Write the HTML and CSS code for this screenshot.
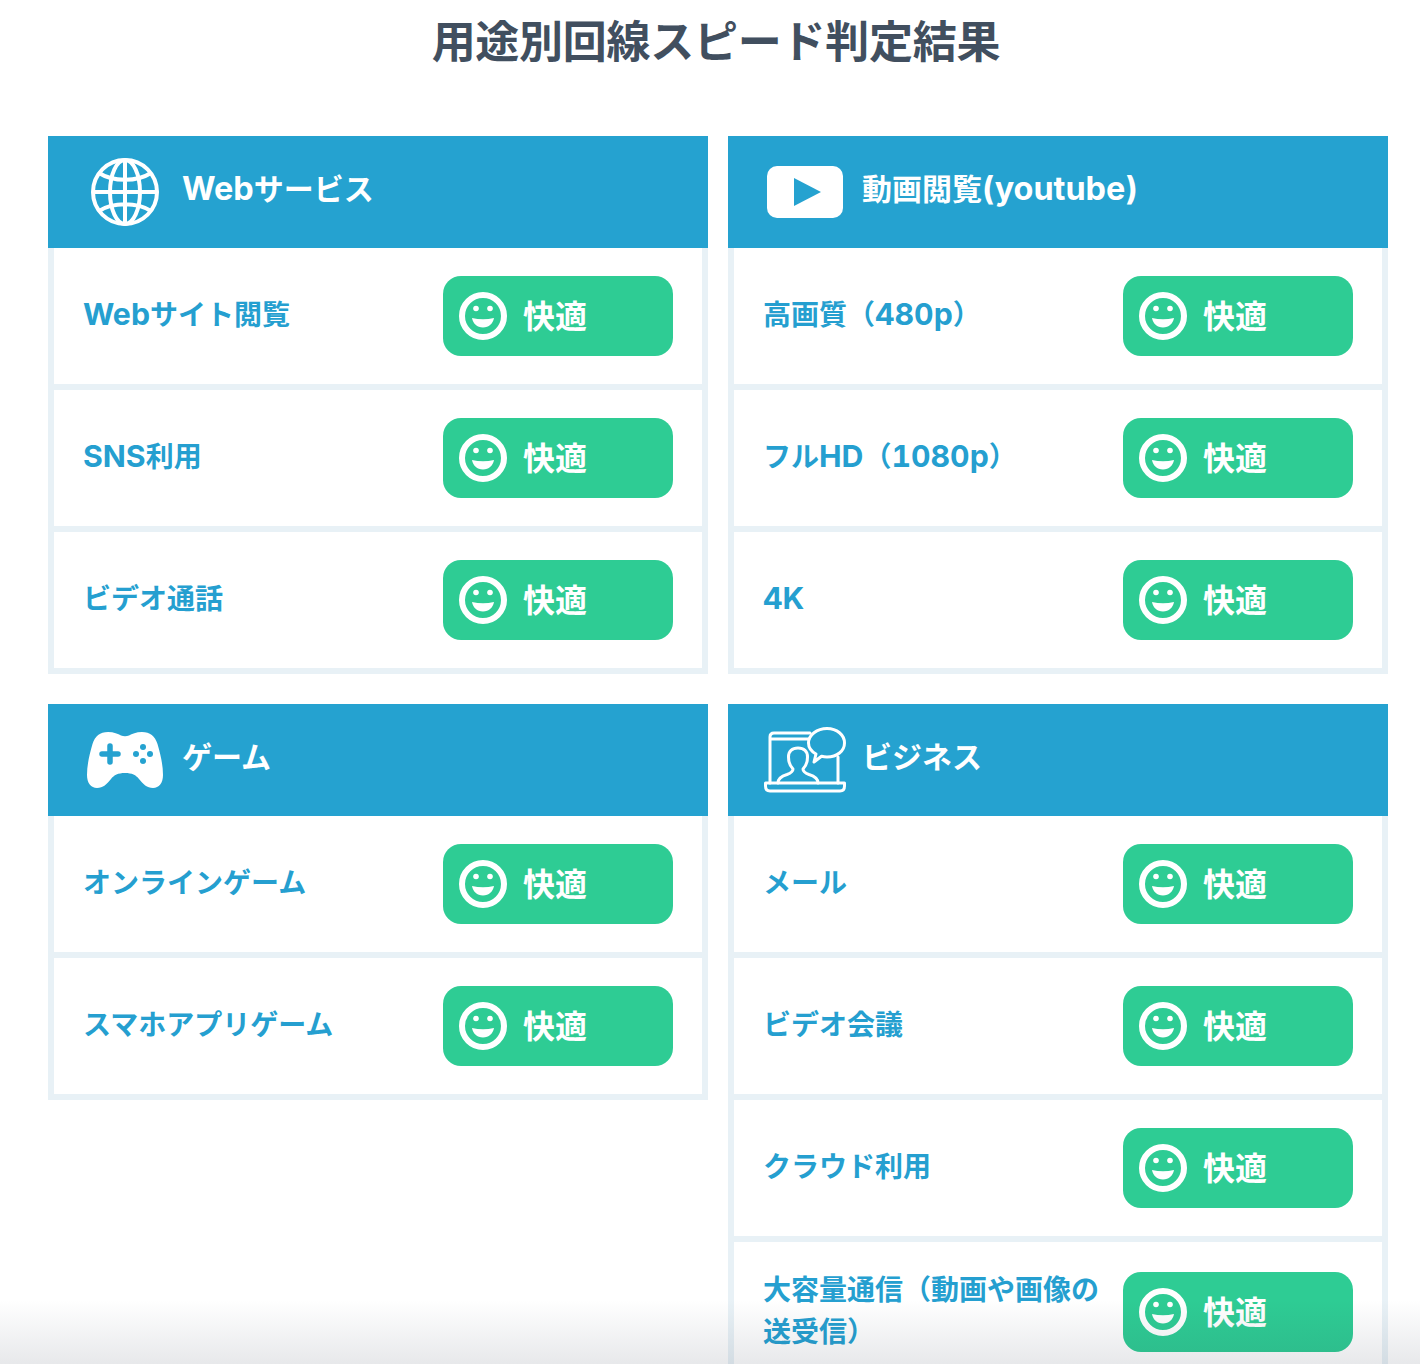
FILE: index.html
```html
<!DOCTYPE html>
<html lang="ja">
<head>
<meta charset="utf-8">
<title>用途別回線スピード判定結果</title>
<link rel="stylesheet" href="styles.css">
</head>
<body>
<svg class="defs" width="0" height="0" aria-hidden="true">
  <symbol id="smile" viewBox="0 0 48 48">
    <circle cx="24" cy="24" r="21" fill="none" stroke="#fff" stroke-width="6"/>
    <circle cx="17" cy="16.500" r="2.800" fill="#fff"/>
    <circle cx="31" cy="16.500" r="2.800" fill="#fff"/>
    <path d="M13 26Q24 28.500 35 26C34 31.500 30 35.500 24 35.500S14 31.500 13 26Z" fill="#fff"/>
  </symbol>
</svg>
<main class="page">
  <h1 class="title">用途別回線スピード判定結果</h1>
  <div class="grid">
    <div class="column">
      <section class="card">
        <header class="card-head">
          <span class="icon-cell">
            <svg class="icon-globe" viewBox="0 0 68 68" fill="none" stroke="#fff" stroke-width="4">
              <circle cx="34" cy="34" r="32"/>
              <ellipse cx="34" cy="34" rx="15" ry="32"/>
              <path d="M34 2V66M2 34H66M8 15C22 24 46 24 60 15M8 53C22 44 46 44 60 53"/>
            </svg>
          </span>
          <h2 class="card-title"><span class="latin">Web</span>サービス</h2>
        </header>
        <div class="row"><p class="label"><span class="latin">Web</span>サイト閲覧</p><div class="badge"><svg class="smile"><use href="#smile"/></svg><span class="badge-text">快適</span></div></div>
        <div class="row"><p class="label"><span class="latin">SNS</span>利用</p><div class="badge"><svg class="smile"><use href="#smile"/></svg><span class="badge-text">快適</span></div></div>
        <div class="row"><p class="label">ビデオ通話</p><div class="badge"><svg class="smile"><use href="#smile"/></svg><span class="badge-text">快適</span></div></div>
      </section>
      <section class="card">
        <header class="card-head">
          <span class="icon-cell">
            <svg class="icon-game" viewBox="0 0 76 56">
              <path fill="#fff" d="M21 0C27 0 31 2 34 3.500C36.500 4.500 39.500 4.500 42 3.500C45 2 49 0 55 0C63 0 68 4 70.500 12C73.500 22 76 33 76 43C76 51 72 56 66 56C60 56 56 52 52 47C49 43 45 41 38 41C31 41 27 43 24 47C20 52 16 56 10 56C4 56 0 51 0 43C0 33 2.500 22 5.500 12C8 4 13 0 21 0Z"/>
              <path fill="none" stroke="#25a2d0" stroke-width="5.500" stroke-linecap="round" d="M23 14V30M15 22H31"/>
              <g fill="#25a2d0"><circle cx="56" cy="15" r="3"/><circle cx="56" cy="29" r="3"/><circle cx="49" cy="22" r="3"/><circle cx="63" cy="22" r="3"/></g>
            </svg>
          </span>
          <h2 class="card-title">ゲーム</h2>
        </header>
        <div class="row"><p class="label">オンラインゲーム</p><div class="badge"><svg class="smile"><use href="#smile"/></svg><span class="badge-text">快適</span></div></div>
        <div class="row"><p class="label">スマホアプリゲーム</p><div class="badge"><svg class="smile"><use href="#smile"/></svg><span class="badge-text">快適</span></div></div>
      </section>
    </div>
    <div class="column">
      <section class="card">
        <header class="card-head">
          <span class="icon-cell">
            <svg class="icon-play" viewBox="0 0 76 52">
              <rect width="76" height="52" rx="10" fill="#fff"/>
              <path d="M27 12L54 26L27 40Z" fill="#25a2d0"/>
            </svg>
          </span>
          <h2 class="card-title">動画閲覧<span class="latin">(youtube)</span></h2>
        </header>
        <div class="row"><p class="label">高画質（<span class="latin">480p</span>）</p><div class="badge"><svg class="smile"><use href="#smile"/></svg><span class="badge-text">快適</span></div></div>
        <div class="row"><p class="label">フル<span class="latin">HD</span>（<span class="latin">1080p</span>）</p><div class="badge"><svg class="smile"><use href="#smile"/></svg><span class="badge-text">快適</span></div></div>
        <div class="row"><p class="label"><span class="latin">4K</span></p><div class="badge"><svg class="smile"><use href="#smile"/></svg><span class="badge-text">快適</span></div></div>
      </section>
      <section class="card">
        <header class="card-head">
          <span class="icon-cell">
            <svg class="icon-biz" viewBox="0 0 82 66" fill="none" stroke="#fff" stroke-width="3" stroke-linejoin="round" stroke-linecap="round">
              <path d="M6 56V10Q6 6 10 6H46M74 30V56M6 12H44"/>
              <path d="M1.500 56H80.500V59Q80.500 64 76 64H6Q1.500 64 1.500 59Z"/>
              <path d="M14 56C14 51 18 49 23 47.500C27 46 29 44 29 42C26 39 24.500 35 24.500 30C24.500 24.500 28 21 34 21C40 21 43.500 24.500 43.500 30C43.500 35 42 39 39 42C39 44 41 46 45 47.500C50 49 54 51 54 56"/>
              <path d="M63 1.500C73 1.500 80.500 8 80.500 16C80.500 24 73 30 63 30C61 30 59 29.700 57.500 29.200L50 35L52 27C47.500 24.500 44.500 20.500 44.500 16C44.500 8 53 1.500 63 1.500Z" fill="#25a2d0"/>
            </svg>
          </span>
          <h2 class="card-title">ビジネス</h2>
        </header>
        <div class="row"><p class="label">メール</p><div class="badge"><svg class="smile"><use href="#smile"/></svg><span class="badge-text">快適</span></div></div>
        <div class="row"><p class="label">ビデオ会議</p><div class="badge"><svg class="smile"><use href="#smile"/></svg><span class="badge-text">快適</span></div></div>
        <div class="row"><p class="label">クラウド利用</p><div class="badge"><svg class="smile"><use href="#smile"/></svg><span class="badge-text">快適</span></div></div>
        <div class="row"><p class="label">大容量通信（動画や画像の送受信）</p><div class="badge"><svg class="smile"><use href="#smile"/></svg><span class="badge-text">快適</span></div></div>
      </section>
    </div>
  </div>
  <div class="fade"></div>
</main>
</body>
</html>
```
FILE: styles.css
```css
* { box-sizing: border-box; }
html, body { margin: 0; padding: 0; background: #fff; }
body { font-family: Inter, "Noto Sans CJK JP", sans-serif; }
.defs { position: absolute; }
.page { position: relative; height: 1364px; overflow: hidden; padding: 0 32px 0 48px; }
.title { margin: 0; height: 136px; padding: 10px 4px 0 0; font-size: 44px; line-height: 64px; font-weight: 700; color: #414f5f; text-align: center; letter-spacing: -.25px; }
.grid { display: grid; grid-template-columns: 660px 660px; gap: 20px; align-items: start; }
.column { display: flex; flex-direction: column; gap: 30px; }
.card { display: flex; flex-direction: column; }
.card-head { display: flex; align-items: center; gap: 14px; height: 112px; padding-left: 34px; background: #25a2d0; }
.icon-cell { display: flex; align-items: center; justify-content: center; width: 86px; flex: none; }
.icon-globe { width: 68px; height: 68px; }
.icon-play { width: 76px; height: 52px; }
.icon-game { width: 76px; height: 56px; }
.icon-biz { width: 82px; height: 66px; }
.card-title { margin: 0 0 6px; font-size: 30px; line-height: 42px; font-weight: 700; color: #fff; }
.latin { font-size: 1.08em; line-height: 1; font-feature-settings: "tnum"; }
.row { display: flex; align-items: center; justify-content: space-between; padding: 28px 29px; border: 6px solid #e8f1f6; border-top: 0; }
.label { margin: -1px 0 1px; font-size: 28px; line-height: 42px; font-weight: 700; color: #259fd0; }
.badge { display: flex; align-items: center; gap: 16px; flex: none; width: 230px; height: 80px; padding-left: 16px; margin-left: 10px; background: #2ecc94; border-radius: 18px; }
.smile { width: 48px; height: 48px; flex: none; }
.badge-text { margin-top: 2px; font-size: 32px; line-height: 42px; font-weight: 700; color: #fff; }
.fade { position: absolute; left: 0; right: 0; bottom: 0; height: 64px; background: linear-gradient(to bottom, rgba(40,50,70,0), rgba(40,50,70,.11)); }
```
